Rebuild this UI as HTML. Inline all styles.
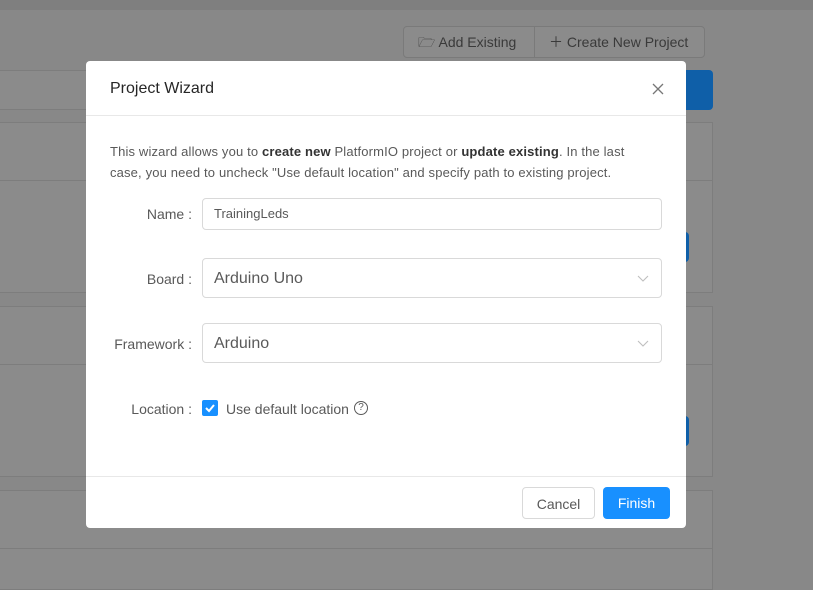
<!DOCTYPE html>
<html><head><style>
*{box-sizing:border-box;margin:0;padding:0}
body{width:813px;height:584px;overflow:hidden;background:#888;font-family:"Liberation Sans",sans-serif;position:relative;font-size:14px;color:#595959}
.abs{position:absolute}
.top{left:0;top:0;width:813px;height:10px;background:#7f7f7f}
.panel{background:#8b8b8b;border:1px solid #7d7d7d}
.tb{border:1px solid #7a7a7a;background:#8b8b8b;height:32px;top:26px;color:#3a3a3a;font-size:14px;line-height:30px;padding:0 14px}
.modal{left:86px;top:61px;width:600px;height:467px;background:#fff;border-radius:4px}
.hdr{height:55px;border-bottom:1px solid #e8e8e8;padding:0 24px;line-height:55px;font-size:16px;color:#262626}
.lbl{position:absolute;right:494px;color:#595959;font-size:14px}
.inp{position:absolute;left:116px;width:460px;border:1px solid #d9d9d9;border-radius:4px;background:#fff;color:#595959}
.btn{position:absolute;top:426px;height:32px;border-radius:4px;line-height:30px;font-size:14px;text-align:center}
.chev{position:absolute;right:12px;top:13px}
</style></head><body>
<div class="abs top"></div>
<div class="abs tb" style="left:403px;width:132px;border-radius:4px 0 0 4px">&#128449; Add Existing</div>
<div class="abs tb" style="left:534px;width:171px;border-radius:0 4px 4px 0">＋ Create New Project</div>
<div class="abs panel" style="left:-2px;top:70px;width:690px;height:40px"></div>
<div class="abs" style="left:680px;top:70px;width:33px;height:40px;background:#0f5fa8;border-radius:4px"></div>
<div class="abs panel" style="left:-2px;top:122px;width:715px;height:171px"></div>
<div class="abs" style="left:-2px;top:180px;width:715px;height:1px;background:#7d7d7d"></div>
<div class="abs" style="left:680px;top:232px;width:9px;height:30px;background:#0f5fa8;border-radius:4px"></div>
<div class="abs panel" style="left:-2px;top:306px;width:715px;height:171px"></div>
<div class="abs" style="left:-2px;top:364px;width:715px;height:1px;background:#7d7d7d"></div>
<div class="abs" style="left:680px;top:416px;width:9px;height:30px;background:#0f5fa8;border-radius:4px"></div>
<div class="abs panel" style="left:-2px;top:490px;width:715px;height:100px"></div>
<div class="abs" style="left:-2px;top:548px;width:715px;height:1px;background:#7d7d7d"></div>
<div class="abs modal">
<div class="hdr">Project Wizard<svg style="position:absolute;right:22px;top:22px" width="12" height="12" viewBox="0 0 12 12"><path d="M1 1L11 11M11 1L1 11" stroke="#777" stroke-width="1.3"/></svg></div>
<div class="abs" style="left:24px;top:80px;width:540px;font-size:13px;line-height:21px;color:#595959;letter-spacing:0.15px">This wizard allows you to <b style="color:#333">create new</b> PlatformIO project or <b style="color:#333">update existing</b>. In the last case, you need to uncheck "Use default location" and specify path to existing project.</div>
<div class="lbl" style="top:145px">Name :</div>
<div class="inp" style="top:137px;height:32px;line-height:30px;padding-left:11px;font-size:13px">TrainingLeds</div>
<div class="lbl" style="top:210px">Board :</div>
<div class="inp" style="top:197px;height:40px;line-height:40px;padding-left:11px;font-size:16px">Arduino Uno<svg class="chev" width="12" height="12" viewBox="0 0 12 12"><path d="M1 4L6 9L11 4" fill="none" stroke="#bfbfbf" stroke-width="1.1"/></svg></div>
<div class="lbl" style="top:275px">Framework :</div>
<div class="inp" style="top:262px;height:40px;line-height:40px;padding-left:11px;font-size:16px">Arduino<svg class="chev" width="12" height="12" viewBox="0 0 12 12"><path d="M1 4L6 9L11 4" fill="none" stroke="#bfbfbf" stroke-width="1.1"/></svg></div>
<div class="lbl" style="top:340px">Location :</div>
<div class="abs" style="left:116px;top:339px;width:16px;height:16px;background:#1890ff;border-radius:2px"><svg width="16" height="16" viewBox="0 0 16 16"><path d="M4 8L7 11L12 5" fill="none" stroke="#fff" stroke-width="2"/></svg></div>
<div class="abs" style="left:140px;top:340px;font-size:14px">Use default location</div>
<div class="abs" style="left:268px;top:340px;width:14px;height:14px;border:1px solid #595959;border-radius:50%;font-size:10px;line-height:12px;text-align:center">?</div>
<div class="abs" style="left:0;top:415px;width:600px;height:1px;background:#e8e8e8"></div>
<div class="btn" style="left:436px;width:73px;border:1px solid #d9d9d9;color:#595959;line-height:32px">Cancel</div>
<div class="btn" style="left:517px;width:67px;background:#1890ff;color:#fff;line-height:32px">Finish</div>
</div>
</body></html>
